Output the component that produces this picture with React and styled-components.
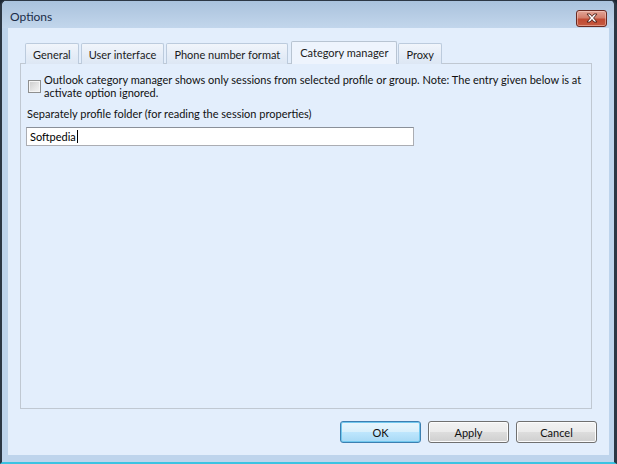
import styled, { createGlobalStyle, css } from "styled-components";

const GlobalStyle = createGlobalStyle`
  html, body {
    margin: 0;
    padding: 0;
    background: #1d2733;
  }
  body {
    font-family: Lato, "Liberation Sans", sans-serif;
    font-size: 11px;
  }
`;

const tabs = ["General", "User interface", "Phone number format", "Category manager", "Proxy"];

const CloseIcon = () => (
  <svg width="14" height="10" viewBox="0 0 14 10">
    <path
      d="M2 1 L5 1 L7 3.4 L9 1 L12 1 L8.6 5 L12 9 L9 9 L7 6.6 L5 9 L2 9 L5.4 5 Z"
      fill="#fff"
      stroke="#4a1e17"
      strokeWidth="0.9"
      strokeLinejoin="round"
    />
  </svg>
);

const App = () => {
  return (
    <>
      <GlobalStyle />
      <Window>
        <TitleBar>
          <Title>Options</Title>
          <CloseButton aria-label="Close">
            <CloseIcon />
          </CloseButton>
        </TitleBar>
        <Client>
          <TabStrip>
            {tabs.map((t) => (
              <Tab key={t} $active={t === "Category manager"}>
                {t}
              </Tab>
            ))}
          </TabStrip>
          <Panel>
            <CheckRow>
              <CheckBox />
              <CheckLabel>
                Outlook category manager shows only sessions from selected profile or group. Note: The entry given below is at
                <br />
                activate option ignored.
              </CheckLabel>
            </CheckRow>
            <FieldLabel>Separately profile folder (for reading the session properties)</FieldLabel>
            <TextInput>
              Softpedia
              <Caret />
            </TextInput>
          </Panel>
          <ButtonRow>
            <Button $default>OK</Button>
            <Button>Apply</Button>
            <Button>Cancel</Button>
          </ButtonRow>
        </Client>
      </Window>
    </>
  );
};

export default App;

const Window = styled.div`
  box-sizing: border-box;
  width: 617px;
  height: 464px;
  display: flex;
  flex-direction: column;
  background: #bed4ec;
  border-top: 1px solid #2c3744;
  border-left: 2px solid #2c3744;
  border-right: 3px solid #2c3744;
  border-bottom: 2px solid #3bc3e2;
  border-radius: 6px 6px 0 0;
  overflow: hidden;
`;

const TitleBar = styled.div`
  height: 29px;
  display: flex;
  align-items: center;
  justify-content: space-between;
  padding: 0 7px 0 8px;
  background: linear-gradient(to bottom, #a9c2dd 0%, #b6cce4 50%, #c2d6ec 100%);
`;

const Title = styled.div`
  font-size: 12px;
  color: #1a2c48;
  margin-top: 3px;
`;

const CloseButton = styled.div`
  box-sizing: border-box;
  width: 31px;
  height: 17px;
  margin-top: 7px;
  display: flex;
  align-items: center;
  justify-content: center;
  border: 1px solid #6a2a22;
  border-radius: 3px;
  background: linear-gradient(to bottom, #e3a597 0%, #d37e6b 45%, #c04a33 55%, #c65a40 100%);
  box-shadow: inset 0 0 0 1px rgba(255, 220, 210, 0.45);
`;

const Client = styled.div`
  flex: 1;
  display: flex;
  flex-direction: column;
  margin: 0 5px 7px 6px;
  padding: 14px 12px 12px 12px;
  background: #e3eefc;
`;

const TabStrip = styled.div`
  display: flex;
  align-items: flex-end;
  padding-left: 5px;
  height: 22px;
  position: relative;
  z-index: 1;
  margin-bottom: -1px;
`;

const Tab = styled.div`
  box-sizing: border-box;
  height: 21px;
  padding: 0 7px;
  margin-right: 2px;
  display: flex;
  align-items: center;
  color: #1b1b1b;
  border: 1px solid #bccbdd;
  border-bottom: none;
  border-radius: 2px 2px 0 0;
  background: linear-gradient(to bottom, #f1f5fb 0%, #e4ecf7 60%, #dde7f4 100%);

  ${({ $active }) =>
    $active &&
    css`
      height: 23px;
      margin: 0 1px 0 1px;
      padding: 0 8px 1px 8px;
      background: #eef4fd;
      border-color: #b8c4d2;
    `}
`;

const Panel = styled.div`
  box-sizing: border-box;
  width: 572px;
  height: 346px;
  border: 1px solid #c0c8d2;
  background: #e3eefc;
  padding: 9px 6px 0 6px;
  display: flex;
  flex-direction: column;
`;

const CheckRow = styled.div`
  display: flex;
  align-items: center;
  gap: 3px;
`;

const CheckBox = styled.div`
  box-sizing: border-box;
  width: 13px;
  height: 13px;
  flex-shrink: 0;
  margin: 1px 0 0 1px;
  border: 1px solid #8e8f8f;
  background: linear-gradient(135deg, #cbcbcb 0%, #e6e6e6 60%, #f4f4f4 100%);
  box-shadow: inset 0 0 0 1px #f5f5f5;
`;

const CheckLabel = styled.div`
  line-height: 13px;
  color: #111;
  white-space: nowrap;
`;

const FieldLabel = styled.div`
  margin-top: 8px;
  line-height: 14px;
  color: #111;
`;

const TextInput = styled.div`
  box-sizing: border-box;
  width: 388px;
  height: 19px;
  margin-top: 6px;
  margin-left: -1px;
  padding: 0 3px;
  display: flex;
  align-items: center;
  background: #fff;
  border: 1px solid #abadb3;
  border-top-color: #8a9099;
  color: #000;
`;

const Caret = styled.span`
  display: inline-block;
  width: 1px;
  height: 13px;
  background: #000;
  margin-left: 1px;
`;

const ButtonRow = styled.div`
  display: flex;
  justify-content: flex-end;
  gap: 7px;
  margin-top: 12px;
`;

const Button = styled.div`
  box-sizing: border-box;
  width: 81px;
  height: 22px;
  display: flex;
  align-items: center;
  justify-content: center;
  color: #111;
  border: 1px solid #707070;
  border-radius: 3px;
  background: linear-gradient(to bottom, #f3f3f3 0%, #ebebeb 48%, #dddddd 52%, #cfcfcf 100%);
  box-shadow: inset 0 0 0 1px #fcfcfc;

  ${({ $default }) =>
    $default &&
    css`
      border-color: #3c7fb1;
      background: linear-gradient(to bottom, #e9f6fd 0%, #d9f0fc 48%, #bee6fd 52%, #a7d9f5 100%);
      box-shadow: inset 0 0 0 1px #72c8ee;
    `}
`;
